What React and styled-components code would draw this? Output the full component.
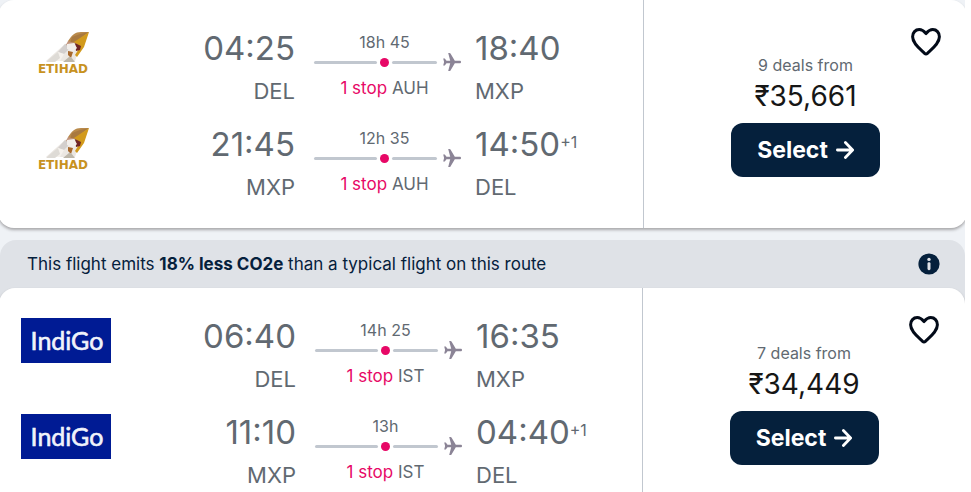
import React from "react";
import styled, { createGlobalStyle } from "styled-components";

const GlobalStyle = createGlobalStyle`
  * {
    box-sizing: border-box;
  }
  body {
    margin: 0;
    background: #fff;
    font-family: Inter, "Liberation Sans", sans-serif;
    color: #616971;
  }
  p {
    margin: 0;
  }
`;

const Results = styled.main`
  height: 100vh;
  margin-right: 6px;
  overflow: hidden;
  background: #eff2f6;
`;

const Ticket = styled.article`
  display: flex;
  margin: ${(props) => (props.$inset ? "0 0 0 -1px" : "0 -2px")};
  border-radius: 16px;
  background: #fff;
  box-shadow: 0 2px 3px rgba(37, 32, 31, 0.35);
`;

const Eco = styled.section`
  margin: 12px 0 0;
  border-radius: 16px;
  background: #dfe2e7;
`;

const EcoHeader = styled.header`
  display: flex;
  align-items: center;
  justify-content: space-between;
  height: 48px;
  padding: 0 25px 0 27px;
  font-size: 17px;
  line-height: 24px;
  color: #05203c;
`;

const InfoButton = styled.button`
  display: flex;
  padding: 0;
  border: 0;
  background: none;
`;

const Legs = styled.div`
  flex: 1;
  display: flex;
  flex-direction: column;
  gap: 18px;
  padding: 28px 0 26px 22px;
`;

const Leg = styled.div`
  display: flex;
`;

const Logo = styled.svg`
  flex: none;
  width: 90px;
  height: 45px;
  margin-top: 2px;
`;

const Place = styled.div`
  width: ${(props) => (props.$end ? "150px" : "185px")};
  text-align: ${(props) => (props.$end ? "left" : "right")};
`;

const Time = styled.p`
  margin-bottom: 8px;
  font-size: 33px;
  line-height: 40px;
  white-space: nowrap;
  sup {
    font-size: 16px;
    line-height: 16px;
    vertical-align: 8px;
  }
`;

const Airport = styled.p`
  font-size: 22px;
  line-height: 30px;
`;

const Stops = styled.div`
  width: 147px;
  margin: 4px 14px 0 19px;
  font-size: 16px;
  line-height: 20px;
  text-align: center;
`;

const Duration = styled.p`
  padding-right: 6px;
`;

const Via = styled.p`
  padding-right: 6px;
  font-size: 17px;
  strong {
    font-weight: 400;
    color: #e70866;
  }
`;

const Route = styled.div`
  display: flex;
  align-items: center;
  height: 20px;
  margin-bottom: 6px;
  svg {
    margin-left: 6px;
  }
`;

const Line = styled.span`
  flex: ${(props) => (props.$short ? "0 0 45px" : "1")};
  height: 3px;
  border-radius: 2px;
  background: #c1c7cf;
`;

const Dot = styled.span`
  width: 9px;
  height: 9px;
  margin: 0 3px;
  border-radius: 50%;
  background: #e70866;
`;

const Side = styled.aside`
  flex: 0 0 ${(props) => (props.$inset ? "323px" : "324px")};
  display: flex;
  flex-direction: column;
  align-items: center;
  padding-top: 28px;
  border-left: 1px solid #c1c7cf;
`;

const SaveButton = styled.button`
  align-self: flex-end;
  display: flex;
  margin-right: 26px;
  padding: 0;
  border: 0;
  background: none;
`;

const Deals = styled.p`
  font-size: 16px;
  line-height: 18px;
`;

const Price = styled.p`
  margin: 4px 0 8px;
  font-size: 28px;
  line-height: 37px;
  color: #161616;
`;

const SelectButton = styled.button`
  display: flex;
  align-items: center;
  justify-content: center;
  gap: 8px;
  width: 149px;
  height: 54px;
  padding: 0;
  border: 0;
  border-radius: 12px;
  background: #05203c;
  color: #fff;
  font-family: inherit;
  font-size: 23px;
  font-weight: 700;
  line-height: 28px;
`;

const EtihadLogo = () => (
  <Logo viewBox="0 0 90 45" role="img" aria-label="Etihad">
    <path d="M45 14L55 11L58 22L55 31H26Z" fill="#ebe7e2" />
    <path d="M45 14L51 17L44 24L38 22Z" fill="#d3cfcd" />
    <path d="M38 22L44 24L40 31H33Z" fill="#f5f1ec" />
    <path d="M33 26L38 22L40 28L35 32H26Z" fill="#dedbd6" />
    <path d="M48 11C52 5 55 2 61 2H69L64 6L55 13L48 15Z" fill="#b98a4b" />
    <path d="M52 7L60 4L69 2L57 11L50 13Z" fill="#a87940" />
    <path d="M69 2L64 17L57 27L55 25L60 17L54 12Z" fill="#d29a1c" />
    <path d="M48 11L55 13L51 17L46 15Z" fill="#c0937a" />
    <path d="M55 13L61 16L60 20L56 21Z" fill="#702524" />
    <path d="M47 14L54 13L57 18L53 22L47 19Z" fill="#f2eeea" />
    <path d="M48 21L53 22L51 28L48 25Z" fill="#a8692d" />
    <path d="M49 27H51L55 32H43Z" fill="#bdb7aa" />
    <text
      x="43"
      y="43"
      textAnchor="middle"
      fontFamily="DejaVu Sans, sans-serif"
      fontSize="12"
      fontWeight="700"
      fill="#c8921f"
    >
      ETIHAD
    </text>
  </Logo>
);

const IndigoLogo = () => (
  <Logo viewBox="0 0 90 45" role="img" aria-label="IndiGo">
    <rect width="90" height="45" fill="#001b94" />
    <text
      x="46"
      y="32"
      textAnchor="middle"
      fontFamily="Lato, sans-serif"
      fontSize="25"
      fill="#f1f3fb"
      stroke="#f1f3fb"
      strokeWidth="0.6"
    >
      IndiGo
    </text>
  </Logo>
);

const Plane = () => (
  <svg width="18" height="18" viewBox="0 0 18 18" aria-hidden="true">
    <path
      fill="#8b8496"
      d="M17 7.8H11.8L7.5 0.5Q7.2 0 6.6 0H5.2L7.2 7.8H3.5L1.8 5.4H0.2L1.1 9L0.2 12.6H1.8L3.5 10.2H7.2L5.2 18H6.6Q7.2 18 7.5 17.5L11.8 10.2H17Q18 10.2 18 9Q18 7.8 17 7.8Z"
    />
  </svg>
);

const Heart = () => (
  <svg width="30" height="28" viewBox="0 0 30 28" aria-hidden="true">
    <path
      fill="none"
      stroke="#020a18"
      strokeWidth="3"
      strokeLinejoin="round"
      d="M15 5.6C12.8 2.9 10.8 1.6 8.2 1.6C4.4 1.6 1.6 4.6 1.6 8.7C1.6 15.3 8.2 20.2 13.6 25.3Q15 26.6 16.4 25.3C21.8 20.2 28.4 15.3 28.4 8.7C28.4 4.6 25.6 1.6 21.8 1.6C19.2 1.6 17.2 2.9 15 5.6Z"
    />
  </svg>
);

const Arrow = () => (
  <svg width="18" height="18" viewBox="0 0 18 18" aria-hidden="true">
    <path
      fill="none"
      stroke="#fff"
      strokeWidth="2.8"
      strokeLinecap="round"
      strokeLinejoin="round"
      d="M1.4 9H16M9.4 1.6L16.6 9L9.4 16.4"
    />
  </svg>
);

const Info = () => (
  <svg width="22" height="22" viewBox="0 0 22 22" aria-hidden="true">
    <circle cx="11" cy="11" r="10.6" fill="#05203c" />
    <circle cx="11" cy="6.4" r="1.7" fill="#dfe2e7" />
    <rect x="9.5" y="9.2" width="3" height="8" rx="1.4" fill="#dfe2e7" />
  </svg>
);

const etihad = [
  { from: "DEL", to: "MXP", start: "04:25", end: "18:40", length: "18h 45", via: "AUH" },
  { from: "MXP", to: "DEL", start: "21:45", end: "14:50", days: "+1", length: "12h 35", via: "AUH" },
];

const indigo = [
  { from: "DEL", to: "MXP", start: "06:40", end: "16:35", length: "14h 25", via: "IST" },
  { from: "MXP", to: "DEL", start: "11:10", end: "04:40", days: "+1", length: "13h", via: "IST" },
];

function Flight({ legs, Airline, deals, price, inset }) {
  return (
    <Ticket $inset={inset}>
      <Legs>
        {legs.map((leg) => (
          <Leg key={leg.start}>
            <Airline />
            <Place>
              <Time>{leg.start}</Time>
              <Airport>{leg.from}</Airport>
            </Place>
            <Stops>
              <Duration>{leg.length}</Duration>
              <Route>
                <Line />
                <Dot />
                <Line $short />
                <Plane />
              </Route>
              <Via>
                <strong>1 stop</strong> {leg.via}
              </Via>
            </Stops>
            <Place $end>
              <Time>
                {leg.end}
                {leg.days && <sup>{leg.days}</sup>}
              </Time>
              <Airport>{leg.to}</Airport>
            </Place>
          </Leg>
        ))}
      </Legs>
      <Side $inset={inset}>
        <SaveButton aria-label="Save flight">
          <Heart />
        </SaveButton>
        <Deals>{deals} deals from</Deals>
        <Price>{price}</Price>
        <SelectButton>
          Select
          <Arrow />
        </SelectButton>
      </Side>
    </Ticket>
  );
}

function App() {
  return (
    <>
      <GlobalStyle />
      <Results>
        <Flight legs={etihad} Airline={EtihadLogo} deals={9} price="₹35,661" />
        <Eco>
          <EcoHeader>
            <p>
              This flight emits <b>18% less CO2e</b> than a typical flight on this route
            </p>
            <InfoButton aria-label="More about emissions">
              <Info />
            </InfoButton>
          </EcoHeader>
          <Flight legs={indigo} Airline={IndigoLogo} deals={7} price="₹34,449" inset />
        </Eco>
      </Results>
    </>
  );
}

export default App;
